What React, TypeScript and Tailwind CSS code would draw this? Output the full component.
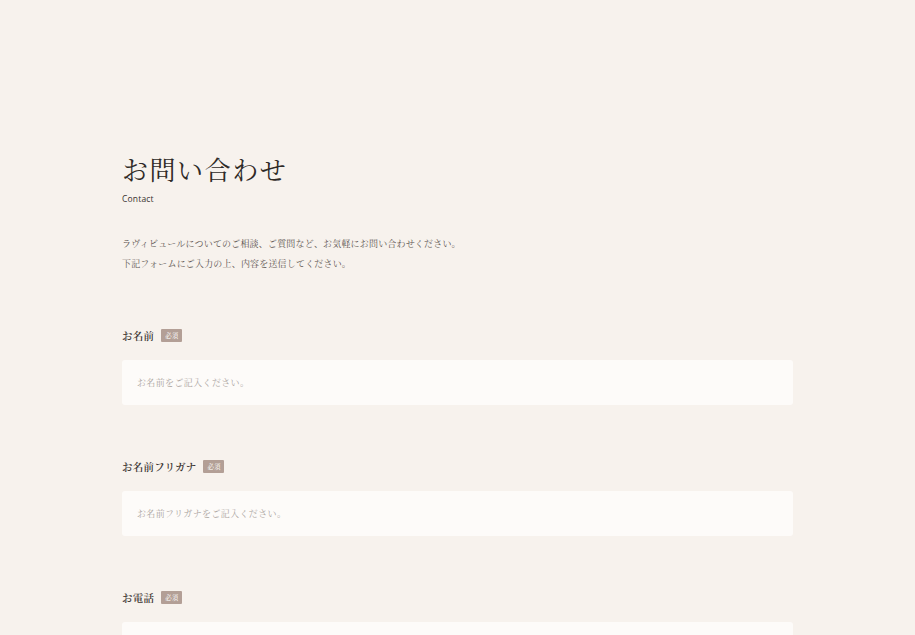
export default function App() {
  const serif = { fontFamily: '"Noto Serif CJK JP", "Liberation Serif", "Noto Sans CJK JP", serif' }

  const fields = [
    { label: "お名前", placeholder: "お名前をご記入ください。" },
    { label: "お名前フリガナ", placeholder: "お名前フリガナをご記入ください。" },
    { label: "お電話", placeholder: "お電話番号をご記入ください。" },
  ]

  return (
    <div className="min-h-screen bg-[#f7f2ed] text-[#3a3330]" style={serif}>
      <div className="mx-auto w-[671px] pt-[152px] pb-20">
        {/* Title */}
        <h1 className="text-[26px] leading-[34px] tracking-[0.06em] text-[#2f2a27]">お問い合わせ</h1>
        <p className="mt-[7px] text-[8.5px] tracking-[0.02em] text-[#3a3330] font-['Open_Sans',sans-serif]">Contact</p>

        {/* Intro */}
        <div className="mt-[28px] text-[9px] leading-[20px] tracking-[0.02em] text-[#5c5450]">
          <p>ラヴィビュールについてのご相談、ご質問など、お気軽にお問い合わせください。</p>
          <p>下記フォームにご入力の上、内容を送信してください。</p>
        </div>

        {/* Form */}
        <form className="mt-[52px] flex flex-col gap-[52px]">
          {fields.map((f) => (
            <div key={f.label}>
              <div className="flex items-center gap-[7px] h-[20px]">
                <span className="text-[10.5px] font-semibold tracking-[0.02em] text-[#3a3330]">{f.label}</span>
                <span className="flex h-[13px] w-[21px] items-center justify-center rounded-[1px] bg-[#b39f96] text-[6.5px] text-white">必須</span>
              </div>
              <input
                type="text"
                placeholder={f.placeholder}
                className="mt-[14px] block h-[45px] w-full rounded-[3px] bg-[#fdfbf9] px-[15px] text-[9px] tracking-[0.04em] outline-none placeholder:text-[#aaa39e]"
                style={serif}
              />
            </div>
          ))}
        </form>
      </div>
    </div>
  )
}
